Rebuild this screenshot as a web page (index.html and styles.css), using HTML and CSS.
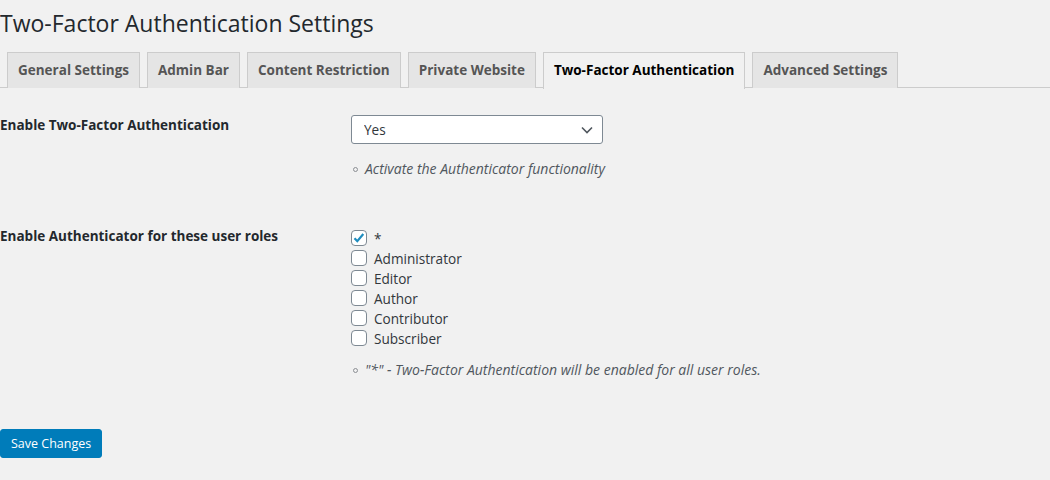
FILE: index.html
```html
<!DOCTYPE html>
<html lang="en">
<head>
<meta charset="UTF-8">
<title>Two-Factor Authentication Settings</title>
<link rel="stylesheet" href="styles.css">
</head>
<body>

<div class="wrap">
  <h1>Two-Factor Authentication Settings</h1>

  <nav class="nav-tabs">
    <a class="nav-tab">General Settings</a>
    <a class="nav-tab">Admin Bar</a>
    <a class="nav-tab">Content Restriction</a>
    <a class="nav-tab">Private Website</a>
    <a class="nav-tab active">Two-Factor Authentication</a>
    <a class="nav-tab">Advanced Settings</a>
  </nav>

  <div class="form-table">
    <div class="row row-first">
      <div class="label">Enable Two-Factor Authentication</div>
      <div class="field">
        <div class="select-wrap">
          <select class="select">
            <option>Yes</option>
            <option>No</option>
          </select>
          <svg class="chevron" width="12" height="8" viewBox="0 0 12 8"><path d="M1 1.5l5 5 5-5" fill="none" stroke="#50575e" stroke-width="1.6"/></svg>
        </div>
        <p class="desc"><span class="bullet"></span>Activate the Authenticator functionality</p>
      </div>
    </div>

    <div class="row row-second">
      <div class="label">Enable Authenticator for these user roles</div>
      <div class="field">
        <div class="checks">
          <label class="check"><span class="box checked"><svg width="14" height="14" viewBox="0 0 14 14"><path d="M2.5 7.2l2.8 3 6-7.2" fill="none" stroke="#1e8cbe" stroke-width="2.2"/></svg></span>*</label>
          <label class="check"><span class="box"></span>Administrator</label>
          <label class="check"><span class="box"></span>Editor</label>
          <label class="check"><span class="box"></span>Author</label>
          <label class="check"><span class="box"></span>Contributor</label>
          <label class="check"><span class="box"></span>Subscriber</label>
        </div>
        <p class="desc desc-roles"><span class="bullet"></span>"*" - Two-Factor Authentication will be enabled for all user roles.</p>
      </div>
    </div>
  </div>

  <button class="button-primary">Save Changes</button>
</div>

</body>
</html>
```

FILE: styles.css
```css
* { margin: 0; padding: 0; box-sizing: border-box; }

body {
  font-family: "Open Sans", "Noto Sans", sans-serif;
  background: #f1f1f1;
  color: #23282d;
  font-size: 13px;
}

.wrap { padding-top: 9px; }

h1 {
  font-size: 23px;
  font-weight: 400;
  line-height: 29px;
  color: #23282d;
}

.nav-tabs {
  display: flex;
  gap: 7px;
  margin-top: 14px;
  padding-left: 7px;
  border-bottom: 1px solid #ccc;
  height: 36px;
}

.nav-tab {
  display: block;
  height: 36px;
  padding: 0 10px;
  line-height: 34px;
  font-size: 13.5px;
  font-weight: 700;
  color: #555;
  background: #e5e5e5;
  border: 1px solid #ccc;
  border-bottom: none;
}

.nav-tab.active {
  background: #f1f1f1;
  color: #000;
  height: 37px;
}

.row {
  display: grid;
  grid-template-columns: 351px 1fr;
}

.row-first { padding-top: 28px; }
.row-second { padding-top: 49px; }

.label {
  font-size: 13.5px;
  font-weight: 700;
  color: #23282d;
  line-height: 18px;
}

.select-wrap {
  position: relative;
  width: 252px;
  margin-top: -1px;
}

.select {
  appearance: none;
  -webkit-appearance: none;
  display: block;
  width: 252px;
  height: 29px;
  padding: 0 12px;
  font-family: inherit;
  font-size: 13.6px;
  color: #32373c;
  background: #fff;
  border: 1px solid #7e8993;
  border-radius: 3px;
}

.chevron {
  position: absolute;
  right: 10px;
  top: 11px;
  pointer-events: none;
}

.desc {
  display: flex;
  align-items: center;
  font-style: italic;
  font-size: 14px;
  color: #50575e;
  margin-top: 16px;
  line-height: 18px;
}

.bullet {
  width: 5px;
  height: 5px;
  border: 1px solid #8c8f94;
  border-radius: 50%;
  margin: 1px 7px 0 2px;
  flex-shrink: 0;
}

.checks {
  display: flex;
  flex-direction: column;
  margin-top: 1px;
}

.check {
  display: flex;
  align-items: center;
  gap: 7px;
  height: 20px;
  font-size: 13.6px;
  color: #32373c;
}

.box {
  width: 16px;
  height: 16px;
  border: 1px solid #7e8993;
  border-radius: 4px;
  background: #fff;
  display: flex;
  align-items: center;
  justify-content: center;
  flex-shrink: 0;
}

.desc-roles { margin-top: 13px; }

.button-primary {
  display: block;
  margin-top: 50px;
  height: 29px;
  padding: 0 10px;
  font-family: inherit;
  font-size: 12.5px;
  color: #fff;
  background: #007cba;
  border: 1px solid #007cba;
  border-radius: 3px;
}
```
